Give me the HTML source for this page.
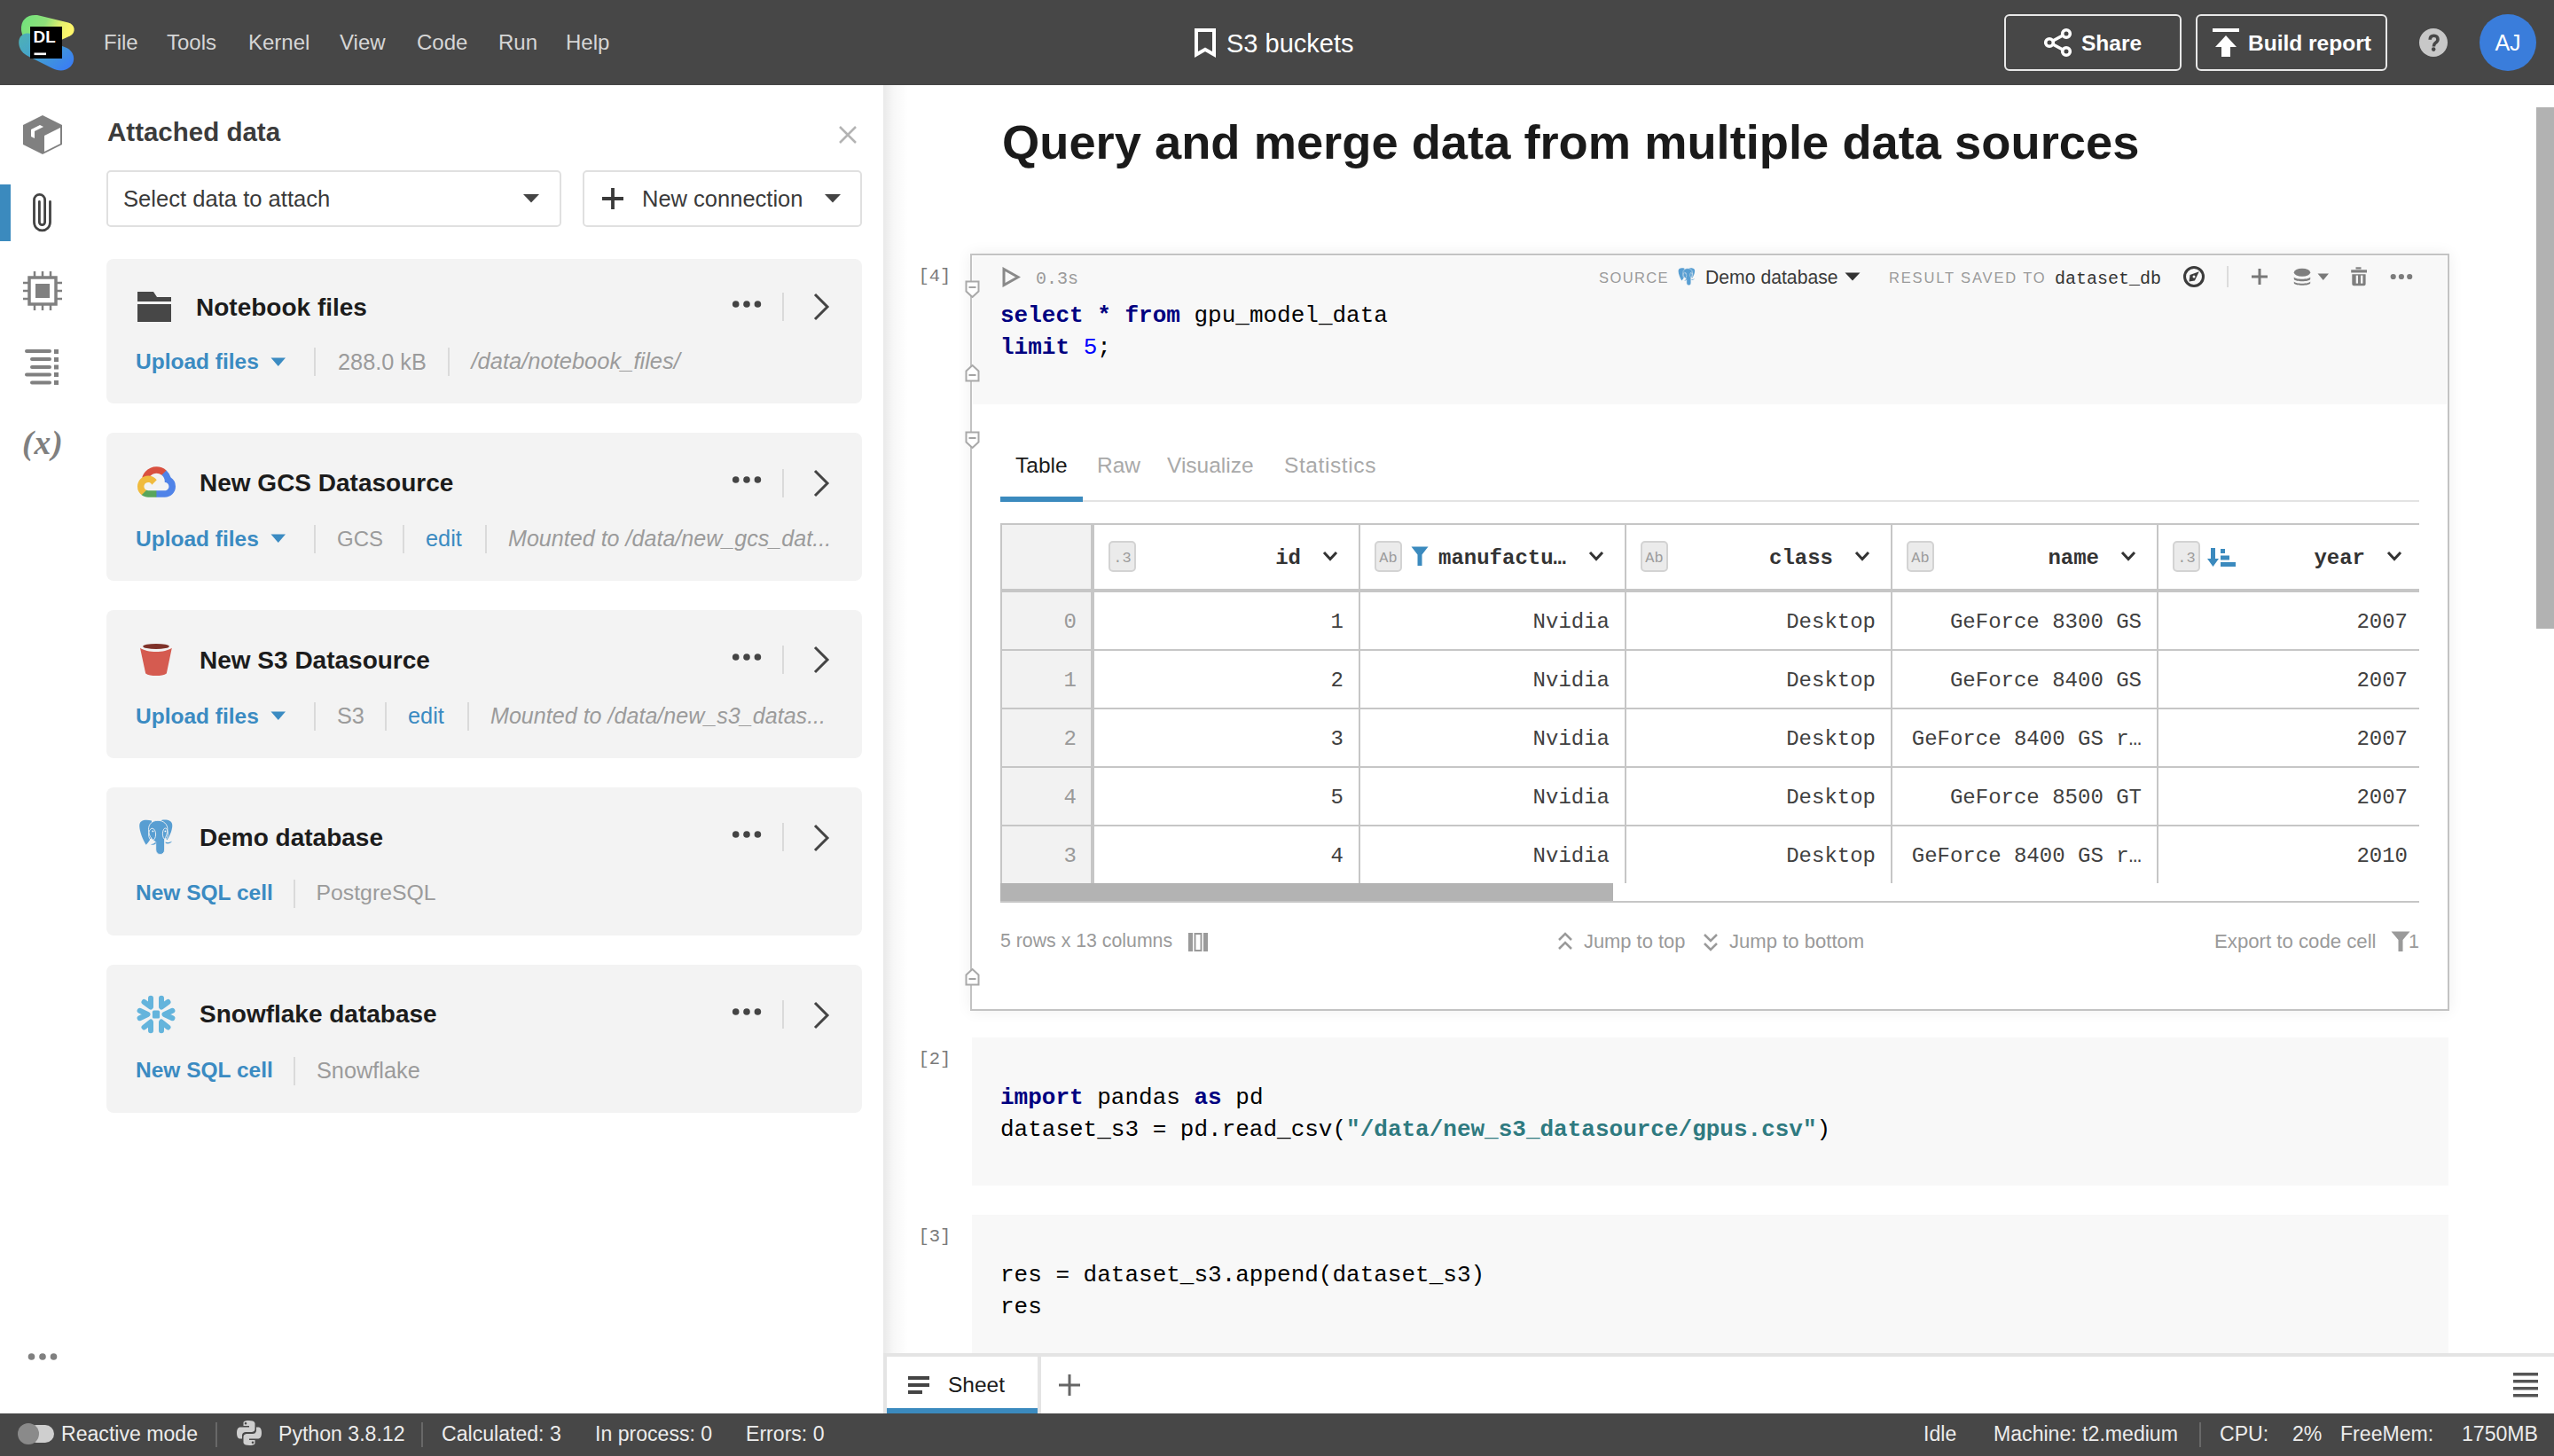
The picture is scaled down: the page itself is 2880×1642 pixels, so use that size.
<!DOCTYPE html><html><head><meta charset="utf-8"><style>
html,body{margin:0;padding:0;}
body{width:2880px;height:1642px;overflow:hidden;position:relative;background:#fff;font-family:"Liberation Sans",sans-serif;}
.t{position:absolute;white-space:pre;}
.r{position:absolute;}
</style></head><body>
<div class="r" style="left:0px;top:0px;width:2880px;height:96px;background:#474747;"></div>
<svg class="r" style="left:0px;top:0px;" width="100" height="96" viewBox="0 0 100 96">
<defs>
<linearGradient id="lg1" x1="0" y1="0" x2="1" y2="0.25"><stop offset="0" stop-color="#6ee27c"/><stop offset="0.5" stop-color="#8fe07a"/><stop offset="0.8" stop-color="#e6f06e"/><stop offset="1" stop-color="#fdf66b"/></linearGradient>
<linearGradient id="lg2" x1="0" y1="0" x2="1" y2="0.8"><stop offset="0" stop-color="#4fb2b4"/><stop offset="0.45" stop-color="#44a3cc"/><stop offset="1" stop-color="#3a7ef3"/></linearGradient>
</defs>
<path d="M24 34 C23 22 31 16 42 17 L77 25.5 C85 27.5 86 37 79 40.5 L68 45.5 L30 44 C26 42 24.5 38 24 34 Z" fill="url(#lg1)"/>
<path d="M21.5 51 C19.5 41 27 35 36 38.5 L74 53.5 C84 57.5 86 69 79 75.5 C73 81 65 80 59 77 L31 63 C25.5 60 22.5 56 21.5 51 Z" fill="url(#lg2)"/>
<rect x="34" y="30" width="36" height="36" fill="#000"/>
<text x="37.6" y="47.9" font-family="Liberation Sans" font-weight="700" font-size="18.8" fill="#fff">DL</text>
<rect x="38.5" y="59.5" width="13.5" height="2.6" fill="#fff"/>
</svg>
<div class="t" style="top:36.18px;font-size:24px;line-height:24px;color:#d6d6d6;font-weight:400;font-family:'Liberation Sans', sans-serif;font-style:normal;left:117px;">File</div>
<div class="t" style="top:36.18px;font-size:24px;line-height:24px;color:#d6d6d6;font-weight:400;font-family:'Liberation Sans', sans-serif;font-style:normal;left:188px;">Tools</div>
<div class="t" style="top:36.18px;font-size:24px;line-height:24px;color:#d6d6d6;font-weight:400;font-family:'Liberation Sans', sans-serif;font-style:normal;left:280px;">Kernel</div>
<div class="t" style="top:36.18px;font-size:24px;line-height:24px;color:#d6d6d6;font-weight:400;font-family:'Liberation Sans', sans-serif;font-style:normal;left:383px;">View</div>
<div class="t" style="top:36.18px;font-size:24px;line-height:24px;color:#d6d6d6;font-weight:400;font-family:'Liberation Sans', sans-serif;font-style:normal;left:470px;">Code</div>
<div class="t" style="top:36.18px;font-size:24px;line-height:24px;color:#d6d6d6;font-weight:400;font-family:'Liberation Sans', sans-serif;font-style:normal;left:562px;">Run</div>
<div class="t" style="top:36.18px;font-size:24px;line-height:24px;color:#d6d6d6;font-weight:400;font-family:'Liberation Sans', sans-serif;font-style:normal;left:638px;">Help</div>
<svg class="r" style="left:1344px;top:30px;" width="30" height="36" viewBox="0 0 30 36"><path d="M5 4 H25 V31.5 L15 25.8 L5 31.5 Z" fill="none" stroke="#fff" stroke-width="4" stroke-linejoin="miter"/></svg>
<div class="t" style="top:35.45px;font-size:29px;line-height:29px;color:#fff;font-weight:400;font-family:'Liberation Sans', sans-serif;font-style:normal;left:1383px;">S3 buckets</div>
<div class="r" style="left:2260px;top:16px;width:200px;height:64px;background:transparent;box-sizing:border-box;border:2px solid #e8e8e8;border-radius:6px;"></div>
<svg class="r" style="left:2304px;top:31px;" width="34" height="34" viewBox="0 0 34 34"><g fill="none" stroke="#fff" stroke-width="3.6">
<circle cx="26" cy="7" r="4.3"/><circle cx="7" cy="17" r="4.3"/><circle cx="26" cy="27" r="4.3"/>
<path d="M11 15 L22 9 M11 19 L22 25"/></g></svg>
<div class="t" style="top:36.76px;font-size:24.5px;line-height:24.5px;color:#fff;font-weight:700;font-family:'Liberation Sans', sans-serif;font-style:normal;left:2347px;">Share</div>
<div class="r" style="left:2476px;top:16px;width:216px;height:64px;background:transparent;box-sizing:border-box;border:2px solid #e8e8e8;border-radius:6px;"></div>
<svg class="r" style="left:2494px;top:31px;" width="32" height="34" viewBox="0 0 32 34"><rect x="1" y="1" width="30" height="4" fill="#fff"/><path d="M16 9 L4 22 H11 V33 H21 V22 H28 Z" fill="#fff"/></svg>
<div class="t" style="top:36.76px;font-size:24.5px;line-height:24.5px;color:#fff;font-weight:700;font-family:'Liberation Sans', sans-serif;font-style:normal;left:2535px;">Build report</div>
<svg class="r" style="left:2728px;top:32px;" width="32" height="32" viewBox="0 0 32 32"><circle cx="16" cy="16" r="16" fill="#c8c8c8"/><path d="M12.2 12.8 C12.2 9.8 14 8.2 16.6 8.2 C19.3 8.2 21 10 21 12.3 C21 14.6 19.6 15.6 18.2 16.5 C16.9 17.4 16.4 18.2 16.4 20.4" fill="none" stroke="#474747" stroke-width="3.6"/><circle cx="16.2" cy="23.6" r="2.3" fill="#474747"/></svg>
<svg class="r" style="left:2796px;top:16px;" width="64" height="64" viewBox="0 0 64 64"><circle cx="32" cy="32" r="32" fill="#3a7ddb"/></svg>
<div class="t" style="top:36.34px;font-size:25px;line-height:25px;color:#fff;font-weight:400;font-family:'Liberation Sans', sans-serif;font-style:normal;left:2128px;width:1400px;text-align:center;">AJ</div>
<svg class="r" style="left:24px;top:128px;" width="48" height="48" viewBox="0 0 48 48"><path d="M24 2 L46 13 V35 L24 46 L2 35 V13 Z" fill="#808080"/>
<path d="M26 25 L44 16 V34 L26 43 Z" fill="#fff"/>
<path d="M11 18 L21 13 L25 15 L15 20 V28 L11 26 Z" fill="#fff"/></svg>
<div class="r" style="left:0px;top:208px;width:12px;height:64px;background:#3b8abe;"></div>
<svg class="r" style="left:30px;top:210px;" width="36" height="56" viewBox="0 0 36 56"><path d="M14.4 17.5 V40.5 A3.1 3.1 0 0 0 20.6 40.5 V15.4 A6.05 6.05 0 0 0 8.5 15.4 V40.8 A9 9 0 0 0 26.5 40.8 V17.3" fill="none" stroke="#434343" stroke-width="2.8" stroke-linecap="round"/></svg>
<svg class="r" style="left:24px;top:304px;" width="48" height="48" viewBox="0 0 48 48"><rect x="9" y="9" width="30" height="30" fill="none" stroke="#808080" stroke-width="3.5"/>
<rect x="16" y="16" width="16" height="16" fill="#808080"/>
<g stroke="#808080" stroke-width="2.5">
<path d="M15 2 V8 M24 2 V8 M33 2 V8 M15 40 V46 M24 40 V46 M33 40 V46 M2 15 H8 M2 24 H8 M2 33 H8 M40 15 H46 M40 24 H46 M40 33 H46"/></g></svg>
<svg class="r" style="left:26px;top:392px;" width="44" height="44" viewBox="0 0 44 44"><g stroke="#808080" stroke-width="4" stroke-linecap="round">
<path d="M4 4 H30 M10 13 H30 M10 22 H30 M4 30.5 H30 M10 39.5 H30"/></g>
<g fill="#808080"><rect x="35" y="2" width="5" height="5"/><rect x="35" y="11" width="5" height="5"/><rect x="35" y="19.5" width="5" height="5"/><rect x="35" y="28" width="5" height="5"/><rect x="35" y="37" width="5" height="5"/></g></svg>
<div class="t" style="top:481.30px;font-size:37.5px;line-height:37.5px;color:#808080;font-weight:700;font-family:'Liberation Serif', serif;font-style:italic;letter-spacing:1px;left:25px;">(x)</div>
<svg class="r" style="left:28px;top:1522px;" width="40" height="16" viewBox="0 0 40 16"><g fill="#808080"><circle cx="7.5" cy="8" r="3.8"/><circle cx="20" cy="8" r="3.8"/><circle cx="32.5" cy="8" r="3.8"/></g></svg>
<div class="t" style="top:133.53px;font-size:29.5px;line-height:29.5px;color:#3c3c3c;font-weight:700;font-family:'Liberation Sans', sans-serif;font-style:normal;left:121px;">Attached data</div>
<svg class="r" style="left:944px;top:141px;" width="24" height="22" viewBox="0 0 24 22"><path d="M3 2 L21 20 M21 2 L3 20" stroke="#b3b3b3" stroke-width="2.5"/></svg>
<div class="r" style="left:120px;top:192px;width:513px;height:64px;background:#fff;box-sizing:border-box;border:2px solid #e0e0e0;border-radius:5px;"></div>
<div class="t" style="top:211.83px;font-size:25.6px;line-height:25.6px;color:#3a3a3a;font-weight:400;font-family:'Liberation Sans', sans-serif;font-style:normal;left:139px;">Select data to attach</div>
<svg class="r" style="left:589px;top:219px;" width="20" height="10" viewBox="0 0 20 10"><path d="M1 0 H19 L10 9.5 Z" fill="#444"/></svg>
<div class="r" style="left:657px;top:192px;width:315px;height:64px;background:#fff;box-sizing:border-box;border:2px solid #e0e0e0;border-radius:5px;"></div>
<svg class="r" style="left:676px;top:210px;" width="30" height="28" viewBox="0 0 30 28"><path d="M15 2 V26 M3 14 H27" stroke="#3a3a3a" stroke-width="3.8"/></svg>
<div class="t" style="top:211.91px;font-size:25.5px;line-height:25.5px;color:#3a3a3a;font-weight:400;font-family:'Liberation Sans', sans-serif;font-style:normal;left:724px;">New connection</div>
<svg class="r" style="left:929px;top:219px;" width="20" height="10" viewBox="0 0 20 10"><path d="M1 0 H19 L10 9.5 Z" fill="#444"/></svg>
<div class="r" style="left:120px;top:292px;width:852px;height:163px;background:#f3f3f3;border-radius:8px;"></div>
<svg class="r" style="left:154px;top:328px" width="40" height="36" viewBox="0 0 40 36"><path d="M1 1 H19 L23 7 H39 V12 H1 Z" fill="#474747"/><rect x="1" y="15" width="38" height="20" fill="#474747"/></svg>
<div class="t" style="top:332.60px;font-size:28px;line-height:28px;color:#1c1c1c;font-weight:700;font-family:'Liberation Sans', sans-serif;font-style:normal;left:221px;">Notebook files</div>
<svg class="r" style="left:822px;top:338px;" width="40" height="10" viewBox="0 0 40 10"><g fill="#444"><circle cx="7.7" cy="5" r="3.8"/><circle cx="20" cy="5" r="3.8"/><circle cx="32.4" cy="5" r="3.8"/></g></svg>
<div class="r" style="left:882px;top:330px;width:2px;height:32px;background:#dadada;"></div>
<svg class="r" style="left:914px;top:330px;" width="24" height="32" viewBox="0 0 24 32"><path d="M5 2 L19 16 L5 30" fill="none" stroke="#444" stroke-width="3"/></svg>
<div class="t" style="top:396.26px;font-size:24.5px;line-height:24.5px;color:#3b8bc2;font-weight:700;font-family:'Liberation Sans', sans-serif;font-style:normal;left:153px;">Upload files</div>
<svg class="r" style="left:305px;top:402.5px;" width="18" height="11" viewBox="0 0 18 11"><path d="M0.5 0.5 H17 L8.75 10 Z" fill="#3b8bc2"/></svg>
<div class="r" style="left:354px;top:392px;width:2px;height:32px;background:#dadada;"></div>
<div class="r" style="left:505px;top:392px;width:2px;height:32px;background:#dadada;"></div>
<div class="t" style="top:395.58px;font-size:25.3px;line-height:25.3px;color:#9b9b9b;font-weight:400;font-family:'Liberation Sans', sans-serif;font-style:normal;left:381px;">288.0 kB</div>
<div class="t" style="top:395.41px;font-size:25.5px;line-height:25.5px;color:#9b9b9b;font-weight:400;font-family:'Liberation Sans', sans-serif;font-style:italic;left:531.5px;">/data/notebook_files/</div>
<div class="r" style="left:120px;top:488px;width:852px;height:167px;background:#f3f3f3;border-radius:8px;"></div>
<svg class="r" style="left:154.5px;top:525.8px" width="43" height="35" viewBox="0 0 256 206"><path fill="#d9503f" d="M170.252 56.819l22.253-22.253 1.483-9.37C153.437-11.677 88.976-7.496 52.42 33.92 42.267 45.423 34.734 59.764 30.717 74.573l7.97-1.123 44.505-7.34 3.436-3.513c19.797-21.742 53.27-24.667 76.128-6.168l7.496.39z"/><path fill="#5083e8" d="M224.205 73.918a100.249 100.249 0 00-30.217-48.722l-31.232 31.232a55.515 55.515 0 0120.379 44.037v5.544c15.35 0 27.797 12.445 27.797 27.796 0 15.352-12.446 27.485-27.797 27.485h-55.671l-5.466 5.934v33.34l5.466 5.231h55.67c39.93.311 72.553-31.494 72.864-71.424a72.303 72.303 0 00-31.793-60.453"/><path fill="#58a55c" d="M71.87 205.796h55.593V161.29H71.87a27.275 27.275 0 01-11.399-2.498l-7.887 2.42-22.409 22.253-1.952 7.574c12.567 9.489 27.9 14.825 43.647 14.757"/><path fill="#f0bb3e" d="M71.87 61.425C31.94 61.664-.237 94.228.001 134.159a72.301 72.301 0 0028.222 56.88l32.248-32.246c-13.99-6.322-20.208-22.786-13.887-36.776 6.32-13.99 22.786-20.208 36.775-13.888a27.796 27.796 0 0113.887 13.888l32.248-32.248A72.224 72.224 0 0071.87 61.425"/></svg>
<div class="t" style="top:531.00px;font-size:28px;line-height:28px;color:#1c1c1c;font-weight:700;font-family:'Liberation Sans', sans-serif;font-style:normal;left:225px;">New GCS Datasource</div>
<svg class="r" style="left:822px;top:536px;" width="40" height="10" viewBox="0 0 40 10"><g fill="#444"><circle cx="7.7" cy="5" r="3.8"/><circle cx="20" cy="5" r="3.8"/><circle cx="32.4" cy="5" r="3.8"/></g></svg>
<div class="r" style="left:882px;top:528.5px;width:2px;height:32px;background:#dadada;"></div>
<svg class="r" style="left:914px;top:528.5px;" width="24" height="32" viewBox="0 0 24 32"><path d="M5 2 L19 16 L5 30" fill="none" stroke="#444" stroke-width="3"/></svg>
<div class="t" style="top:595.96px;font-size:24.5px;line-height:24.5px;color:#3b8bc2;font-weight:700;font-family:'Liberation Sans', sans-serif;font-style:normal;left:153px;">Upload files</div>
<svg class="r" style="left:305px;top:602.2px;" width="18" height="11" viewBox="0 0 18 11"><path d="M0.5 0.5 H17 L8.75 10 Z" fill="#3b8bc2"/></svg>
<div class="r" style="left:354px;top:592px;width:2px;height:32px;background:#dadada;"></div>
<div class="r" style="left:454px;top:592px;width:2px;height:32px;background:#dadada;"></div>
<div class="r" style="left:547px;top:592px;width:2px;height:32px;background:#dadada;"></div>
<div class="t" style="top:596.38px;font-size:24px;line-height:24px;color:#9b9b9b;font-weight:400;font-family:'Liberation Sans', sans-serif;font-style:normal;left:380px;">GCS</div>
<div class="t" style="top:595.28px;font-size:25.3px;line-height:25.3px;color:#3b8bc2;font-weight:400;font-family:'Liberation Sans', sans-serif;font-style:normal;left:480px;">edit</div>
<div class="t" style="top:595.45px;font-size:25.1px;line-height:25.1px;color:#9b9b9b;font-weight:400;font-family:'Liberation Sans', sans-serif;font-style:italic;left:573px;">Mounted to /data/new_gcs_dat...</div>
<div class="r" style="left:120px;top:688px;width:852px;height:167px;background:#f3f3f3;border-radius:8px;"></div>
<svg class="r" style="left:156px;top:725px" width="40" height="40" viewBox="0 0 40 40"><path d="M2 5.8 L8.2 34.4 C13 38 27 38 31.8 34.4 L37.8 5.8 C30 11.5 10 11.5 2 5.8 Z" fill="#d55b50"/><ellipse cx="20" cy="3.9" rx="14.8" ry="3" fill="#7e3128"/></svg>
<div class="t" style="top:731.10px;font-size:28px;line-height:28px;color:#1c1c1c;font-weight:700;font-family:'Liberation Sans', sans-serif;font-style:normal;left:225px;">New S3 Datasource</div>
<svg class="r" style="left:822px;top:735.7px;" width="40" height="10" viewBox="0 0 40 10"><g fill="#444"><circle cx="7.7" cy="5" r="3.8"/><circle cx="20" cy="5" r="3.8"/><circle cx="32.4" cy="5" r="3.8"/></g></svg>
<div class="r" style="left:882px;top:728px;width:2px;height:32px;background:#dadada;"></div>
<svg class="r" style="left:914px;top:728px;" width="24" height="32" viewBox="0 0 24 32"><path d="M5 2 L19 16 L5 30" fill="none" stroke="#444" stroke-width="3"/></svg>
<div class="t" style="top:795.76px;font-size:24.5px;line-height:24.5px;color:#3b8bc2;font-weight:700;font-family:'Liberation Sans', sans-serif;font-style:normal;left:153px;">Upload files</div>
<svg class="r" style="left:305px;top:802.0px;" width="18" height="11" viewBox="0 0 18 11"><path d="M0.5 0.5 H17 L8.75 10 Z" fill="#3b8bc2"/></svg>
<div class="r" style="left:354px;top:792px;width:2px;height:32px;background:#dadada;"></div>
<div class="r" style="left:434px;top:792px;width:2px;height:32px;background:#dadada;"></div>
<div class="r" style="left:527px;top:792px;width:2px;height:32px;background:#dadada;"></div>
<div class="t" style="top:795.08px;font-size:25.3px;line-height:25.3px;color:#9b9b9b;font-weight:400;font-family:'Liberation Sans', sans-serif;font-style:normal;left:380px;">S3</div>
<div class="t" style="top:795.08px;font-size:25.3px;line-height:25.3px;color:#3b8bc2;font-weight:400;font-family:'Liberation Sans', sans-serif;font-style:normal;left:460px;">edit</div>
<div class="t" style="top:795.25px;font-size:25.1px;line-height:25.1px;color:#9b9b9b;font-weight:400;font-family:'Liberation Sans', sans-serif;font-style:italic;left:553px;">Mounted to /data/new_s3_datas...</div>
<div class="r" style="left:120px;top:888px;width:852px;height:167px;background:#f3f3f3;border-radius:8px;"></div>
<svg class="r" style="left:140px;top:900px" width="80" height="80" viewBox="0 0 80 80"><g fill="#589ed2"><path d="M31 25.5 C25 24 17 24 17.2 31.5 C17.5 38 21 47 24.7 52.8 C27.5 50 30 46 31 43 Z"/><path d="M42 25 C47 24 54.5 24.5 54.3 31.5 C54 37 51 43.5 48.4 47.3 C46 45 44 42 43 40 Z"/><path d="M38 25.3 C44.5 25.3 48.9 29.5 48.9 35 C48.9 40 47 43.5 45.6 47 L45.6 58 C45.6 61.5 43.5 63.5 40.7 63.5 C38 63.5 35.7 61.5 35.7 58 L35.7 49.5 C33 48 27.5 44 27.5 35.5 C27.5 29.5 31.5 25.3 38 25.3 Z" stroke="#f3f3f3" stroke-width="0.9"/><path d="M29.7 52 C32 52.5 34.5 51 35.7 49 L35.7 51.5 C34 53 31.5 53.2 29.7 52 Z"/><path d="M46.7 49.5 C49 50.5 52 50 54 48.5 C53 51 49.5 52 46.7 51 Z"/><ellipse cx="31.6" cy="41" rx="4" ry="6.8" fill="none" stroke="#f3f3f3" stroke-width="0.9"/><ellipse cx="46.4" cy="40.3" rx="3" ry="6.3" fill="none" stroke="#f3f3f3" stroke-width="0.9"/><circle cx="32.4" cy="37.4" r="0.9" fill="#fff"/><circle cx="46.4" cy="37.4" r="0.9" fill="#fff"/></g></svg>
<div class="t" style="top:930.90px;font-size:28px;line-height:28px;color:#1c1c1c;font-weight:700;font-family:'Liberation Sans', sans-serif;font-style:normal;left:225px;">Demo database</div>
<svg class="r" style="left:822px;top:935.8px;" width="40" height="10" viewBox="0 0 40 10"><g fill="#444"><circle cx="7.7" cy="5" r="3.8"/><circle cx="20" cy="5" r="3.8"/><circle cx="32.4" cy="5" r="3.8"/></g></svg>
<div class="r" style="left:882px;top:928px;width:2px;height:32px;background:#dadada;"></div>
<svg class="r" style="left:914px;top:928.6px;" width="24" height="32" viewBox="0 0 24 32"><path d="M5 2 L19 16 L5 30" fill="none" stroke="#444" stroke-width="3"/></svg>
<div class="t" style="top:995.46px;font-size:24.5px;line-height:24.5px;color:#3b8bc2;font-weight:700;font-family:'Liberation Sans', sans-serif;font-style:normal;left:153px;">New SQL cell</div>
<div class="r" style="left:331px;top:992px;width:2px;height:32px;background:#dadada;"></div>
<div class="t" style="top:995.21px;font-size:24.8px;line-height:24.8px;color:#9b9b9b;font-weight:400;font-family:'Liberation Sans', sans-serif;font-style:normal;left:356.5px;">PostgreSQL</div>
<div class="r" style="left:120px;top:1088px;width:852px;height:167px;background:#f3f3f3;border-radius:8px;"></div>
<svg class="r" style="left:140px;top:1100px" width="80" height="80" viewBox="0 0 80 80"><g fill="none" stroke="#64b4dc" stroke-width="6" stroke-linecap="round" stroke-linejoin="round"><path d="M22.5 30 L30 35.5 V25.8"/><path d="M49.5 30 L42 35.5 V25.8"/><path d="M17.6 39.8 L26.5 44 L17.6 48.2"/><path d="M54.4 39.8 L45.5 44 L54.4 48.2"/><path d="M22.5 58.5 L30 52.5 V62.3"/><path d="M49.5 58.5 L42 52.5 V62.3"/></g><rect x="31.9" y="39.6" width="8.2" height="9" rx="1.6" fill="#64b4dc"/></svg>
<div class="t" style="top:1129.90px;font-size:28px;line-height:28px;color:#1c1c1c;font-weight:700;font-family:'Liberation Sans', sans-serif;font-style:normal;left:225px;">Snowflake database</div>
<svg class="r" style="left:822px;top:1136px;" width="40" height="10" viewBox="0 0 40 10"><g fill="#444"><circle cx="7.7" cy="5" r="3.8"/><circle cx="20" cy="5" r="3.8"/><circle cx="32.4" cy="5" r="3.8"/></g></svg>
<div class="r" style="left:882px;top:1128px;width:2px;height:32px;background:#dadada;"></div>
<svg class="r" style="left:914px;top:1128.7px;" width="24" height="32" viewBox="0 0 24 32"><path d="M5 2 L19 16 L5 30" fill="none" stroke="#444" stroke-width="3"/></svg>
<div class="t" style="top:1195.26px;font-size:24.5px;line-height:24.5px;color:#3b8bc2;font-weight:700;font-family:'Liberation Sans', sans-serif;font-style:normal;left:153px;">New SQL cell</div>
<div class="r" style="left:331px;top:1192px;width:2px;height:32px;background:#dadada;"></div>
<div class="t" style="top:1194.58px;font-size:25.3px;line-height:25.3px;color:#9b9b9b;font-weight:400;font-family:'Liberation Sans', sans-serif;font-style:normal;left:357px;">Snowflake</div>
<div class="r" style="left:996px;top:96px;width:28px;height:1430px;background:linear-gradient(to right, rgba(0,0,0,0.085), rgba(0,0,0,0.03) 40%, rgba(0,0,0,0));"></div>
<div class="r" style="left:2860px;top:121px;width:20px;height:588px;background:#b2b2b2;"></div>
<div class="t" style="top:134.04px;font-size:54.3px;line-height:54.3px;color:#1a1a1a;font-weight:700;font-family:'Liberation Sans', sans-serif;font-style:normal;left:1130px;">Query and merge data from multiple data sources</div>
<div class="r" style="left:1094px;top:286px;width:1668px;height:854px;background:#fff;box-sizing:border-box;border:2px solid #c3c3c3;box-shadow:0 0 16px rgba(0,0,0,0.07);"></div>
<div class="r" style="left:1097px;top:289px;width:1662px;height:167px;background:#f8f8f8;"></div>
<div class="t" style="top:302.29px;font-size:20.5px;line-height:20.5px;color:#7a7a7a;font-weight:400;font-family:'Liberation Mono', monospace;font-style:normal;left:1035.5px;">[4]</div>
<svg class="r" style="left:1087.5px;top:315.5px;" width="17" height="20" viewBox="0 0 17 20"><path d="M1.5 1.5 H15.5 V12.5 L8.5 19 L1.5 12.5 Z" fill="#fff" stroke="#a9a9a9" stroke-width="2"/><path d="M4.5 8 H12.5" stroke="#a3a3a3" stroke-width="2"/></svg>
<svg class="r" style="left:1087.5px;top:410.5px;" width="17" height="20" viewBox="0 0 17 20"><path d="M1.5 18.5 H15.5 V7.5 L8.5 1 L1.5 7.5 Z" fill="#fff" stroke="#a9a9a9" stroke-width="2"/><path d="M4.5 12 H12.5" stroke="#a3a3a3" stroke-width="2"/></svg>
<svg class="r" style="left:1087.5px;top:486px;" width="17" height="20" viewBox="0 0 17 20"><path d="M1.5 1.5 H15.5 V12.5 L8.5 19 L1.5 12.5 Z" fill="#fff" stroke="#a9a9a9" stroke-width="2"/><path d="M4.5 8 H12.5" stroke="#a3a3a3" stroke-width="2"/></svg>
<svg class="r" style="left:1087.5px;top:1092px;" width="17" height="20" viewBox="0 0 17 20"><path d="M1.5 18.5 H15.5 V7.5 L8.5 1 L1.5 7.5 Z" fill="#fff" stroke="#a9a9a9" stroke-width="2"/><path d="M4.5 12 H12.5" stroke="#a3a3a3" stroke-width="2"/></svg>
<svg class="r" style="left:1129px;top:301px;" width="22" height="23" viewBox="0 0 22 23"><path d="M3 2.5 L19 11.5 L3 20.5 Z" fill="none" stroke="#8a8a8a" stroke-width="3" stroke-linejoin="miter"/></svg>
<div class="t" style="top:304.68px;font-size:20px;line-height:20px;color:#9a9a9a;font-weight:400;font-family:'Liberation Mono', monospace;font-style:normal;left:1168px;">0.3s</div>
<div class="t" style="top:343.08px;font-size:26px;line-height:26px;color:#000;font-weight:400;font-family:'Liberation Mono', monospace;font-style:normal;left:1128px;"><b style="color:#000080">select</b> <b style="color:#000080">*</b> <b style="color:#000080">from</b> gpu_model_data</div>
<div class="t" style="top:379.08px;font-size:26px;line-height:26px;color:#000;font-weight:400;font-family:'Liberation Mono', monospace;font-style:normal;left:1128px;"><b style="color:#000080">limit</b> <span style="color:#0000ff">5</span>;</div>
<div class="t" style="top:305.03px;font-size:16.5px;line-height:16.5px;color:#9a9a9a;font-weight:400;font-family:'Liberation Sans', sans-serif;font-style:normal;letter-spacing:1.4px;left:1803px;">SOURCE</div>
<svg class="r" style="left:1884px;top:289.5px" width="40" height="40" viewBox="0 0 80 80"><g fill="#589ed2"><path d="M31 25.5 C25 24 17 24 17.2 31.5 C17.5 38 21 47 24.7 52.8 C27.5 50 30 46 31 43 Z"/><path d="M42 25 C47 24 54.5 24.5 54.3 31.5 C54 37 51 43.5 48.4 47.3 C46 45 44 42 43 40 Z"/><path d="M38 25.3 C44.5 25.3 48.9 29.5 48.9 35 C48.9 40 47 43.5 45.6 47 L45.6 58 C45.6 61.5 43.5 63.5 40.7 63.5 C38 63.5 35.7 61.5 35.7 58 L35.7 49.5 C33 48 27.5 44 27.5 35.5 C27.5 29.5 31.5 25.3 38 25.3 Z" stroke="#f3f3f3" stroke-width="0.9"/><path d="M29.7 52 C32 52.5 34.5 51 35.7 49 L35.7 51.5 C34 53 31.5 53.2 29.7 52 Z"/><path d="M46.7 49.5 C49 50.5 52 50 54 48.5 C53 51 49.5 52 46.7 51 Z"/><ellipse cx="31.6" cy="41" rx="4" ry="6.8" fill="none" stroke="#f3f3f3" stroke-width="0.9"/><ellipse cx="46.4" cy="40.3" rx="3" ry="6.3" fill="none" stroke="#f3f3f3" stroke-width="0.9"/><circle cx="32.4" cy="37.4" r="0.9" fill="#fff"/><circle cx="46.4" cy="37.4" r="0.9" fill="#fff"/></g></svg>
<div class="t" style="top:301.75px;font-size:21.2px;line-height:21.2px;color:#3a3a3a;font-weight:400;font-family:'Liberation Sans', sans-serif;font-style:normal;left:1923px;">Demo database</div>
<svg class="r" style="left:2080px;top:307px;" width="18" height="10" viewBox="0 0 18 10"><path d="M0.5 0.5 H17.5 L9 9.5 Z" fill="#333"/></svg>
<div class="t" style="top:305.03px;font-size:16.5px;line-height:16.5px;color:#9a9a9a;font-weight:400;font-family:'Liberation Sans', sans-serif;font-style:normal;letter-spacing:1.85px;left:2130px;">RESULT SAVED TO</div>
<div class="t" style="top:304.68px;font-size:20px;line-height:20px;color:#333;font-weight:400;font-family:'Liberation Mono', monospace;font-style:normal;left:2317px;">dataset_db</div>
<svg class="r" style="left:2461px;top:299px;" width="26" height="26" viewBox="0 0 26 26"><circle cx="13" cy="13" r="10.5" fill="none" stroke="#3c3c3c" stroke-width="3"/><path d="M18.8 7.2 L13.9 17.6 L7.5 18.6 L8.5 11 Z" fill="#3c3c3c"/><circle cx="13" cy="13" r="1.5" fill="#f8f8f8"/></svg>
<div class="r" style="left:2511px;top:300px;width:2px;height:24px;background:#dcdcdc;"></div>
<svg class="r" style="left:2538px;top:302px;" width="20" height="20" viewBox="0 0 20 20"><path d="M10 1 V19 M1 10 H19" stroke="#787878" stroke-width="3"/></svg>
<svg class="r" style="left:2586px;top:302px;" width="20" height="21" viewBox="0 0 20 21"><g fill="#7f7f7f"><ellipse cx="10" cy="5.3" rx="9.2" ry="4.5"/><path d="M0.8 10.5 C2.5 13.5 17.5 13.5 19.2 10.5 V13 C17.5 16 2.5 16 0.8 13 Z"/><path d="M0.8 15.5 C2.5 18.5 17.5 18.5 19.2 15.5 V17.5 C17.5 20.5 2.5 20.5 0.8 17.5 Z"/></g></svg>
<svg class="r" style="left:2613px;top:308px;" width="14" height="9" viewBox="0 0 14 9"><path d="M0.5 0.5 H13 L6.75 8 Z" fill="#7a7a7a"/></svg>
<svg class="r" style="left:2650px;top:300px;" width="20" height="24" viewBox="0 0 20 24"><g fill="#7f7f7f"><rect x="6.5" y="1.3" width="6" height="2.2"/><rect x="1.2" y="4.3" width="17.8" height="3.2"/><path d="M2.3 9.2 H17.6 V20.3 C17.6 21.5 16.8 22.3 15.6 22.3 H4.3 C3.1 22.3 2.3 21.5 2.3 20.3 Z"/></g><g fill="#f8f8f8"><rect x="6.7" y="10.6" width="2.3" height="9"/><rect x="12" y="10.6" width="2.4" height="9"/></g></svg>
<svg class="r" style="left:2694px;top:307px;" width="28" height="10" viewBox="0 0 28 10"><g fill="#7c7c7c"><circle cx="4.7" cy="5" r="3.1"/><circle cx="13.9" cy="5" r="3.1"/><circle cx="23.2" cy="5" r="3.1"/></g></svg>
<div class="t" style="top:512.66px;font-size:24.5px;line-height:24.5px;color:#1a1a1a;font-weight:400;font-family:'Liberation Sans', sans-serif;font-style:normal;left:1145px;">Table</div>
<div class="t" style="top:512.66px;font-size:24.5px;line-height:24.5px;color:#a9a9a9;font-weight:400;font-family:'Liberation Sans', sans-serif;font-style:normal;left:1237px;">Raw</div>
<div class="t" style="top:512.66px;font-size:24.5px;line-height:24.5px;color:#a9a9a9;font-weight:400;font-family:'Liberation Sans', sans-serif;font-style:normal;left:1316px;">Visualize</div>
<div class="t" style="top:512.66px;font-size:24.5px;line-height:24.5px;color:#a9a9a9;font-weight:400;font-family:'Liberation Sans', sans-serif;font-style:normal;letter-spacing:0.6px;left:1448px;">Statistics</div>
<div class="r" style="left:1128px;top:564px;width:1600px;height:2px;background:#e3e3e3;"></div>
<div class="r" style="left:1128px;top:560px;width:93px;height:6px;background:#3b8abe;"></div>
<div class="r" style="left:1128px;top:590px;width:102px;height:406px;background:#f2f2f2;"></div>
<div class="r" style="left:1128px;top:590px;width:1600px;height:2px;background:#c6c6c6;"></div>
<div class="r" style="left:1128px;top:590px;width:2px;height:428px;background:#c6c6c6;"></div>
<div class="r" style="left:1128px;top:664px;width:1600px;height:4px;background:#c6c6c6;"></div>
<div class="r" style="left:1128px;top:732px;width:1600px;height:2px;background:#c6c6c6;"></div>
<div class="r" style="left:1128px;top:798px;width:1600px;height:2px;background:#c6c6c6;"></div>
<div class="r" style="left:1128px;top:864px;width:1600px;height:2px;background:#c6c6c6;"></div>
<div class="r" style="left:1128px;top:930px;width:1600px;height:2px;background:#c6c6c6;"></div>
<div class="r" style="left:1230px;top:590px;width:4px;height:406px;background:#c6c6c6;"></div>
<div class="r" style="left:1532px;top:590px;width:2px;height:406px;background:#c6c6c6;"></div>
<div class="r" style="left:1832px;top:590px;width:2px;height:406px;background:#c6c6c6;"></div>
<div class="r" style="left:2132px;top:590px;width:2px;height:406px;background:#c6c6c6;"></div>
<div class="r" style="left:2432px;top:590px;width:2px;height:406px;background:#c6c6c6;"></div>
<div class="r" style="left:1128px;top:996px;width:1600px;height:22px;background:#fff;box-sizing:border-box;border-bottom:2px solid #c6c6c6;"></div>
<div class="r" style="left:1128px;top:996px;width:691px;height:20px;background:#b3b3b3;"></div>
<div class="r" style="left:1250px;top:610px;width:31px;height:35px;background:#ebebeb;box-sizing:border-box;border:2px solid #d3d3d3;border-radius:5px;"></div>
<div class="t" style="top:620.97px;font-size:17px;line-height:17px;color:#9d9d9d;font-weight:400;font-family:'Liberation Mono', monospace;font-style:normal;left:565.5px;width:1400px;text-align:center;">.3</div>
<div class="t" style="top:617.61px;font-size:24px;line-height:24px;color:#333;font-weight:700;font-family:'Liberation Mono', monospace;font-style:normal;left:67px;width:1400px;text-align:right;">id</div>
<svg class="r" style="left:1491px;top:621px;" width="18" height="13" viewBox="0 0 18 13"><path d="M2 2 L9 9.5 L16 2" fill="none" stroke="#333" stroke-width="3"/></svg>
<div class="r" style="left:1550px;top:610px;width:31px;height:35px;background:#ebebeb;box-sizing:border-box;border:2px solid #d3d3d3;border-radius:5px;"></div>
<div class="t" style="top:620.97px;font-size:17px;line-height:17px;color:#9d9d9d;font-weight:400;font-family:'Liberation Mono', monospace;font-style:normal;left:865.5px;width:1400px;text-align:center;">Ab</div>
<div class="t" style="top:617.61px;font-size:24px;line-height:24px;color:#333;font-weight:700;font-family:'Liberation Mono', monospace;font-style:normal;left:1622px;">manufactu…</div>
<svg class="r" style="left:1791px;top:621px;" width="18" height="13" viewBox="0 0 18 13"><path d="M2 2 L9 9.5 L16 2" fill="none" stroke="#333" stroke-width="3"/></svg>
<div class="r" style="left:1850px;top:610px;width:31px;height:35px;background:#ebebeb;box-sizing:border-box;border:2px solid #d3d3d3;border-radius:5px;"></div>
<div class="t" style="top:620.97px;font-size:17px;line-height:17px;color:#9d9d9d;font-weight:400;font-family:'Liberation Mono', monospace;font-style:normal;left:1165.5px;width:1400px;text-align:center;">Ab</div>
<div class="t" style="top:617.61px;font-size:24px;line-height:24px;color:#333;font-weight:700;font-family:'Liberation Mono', monospace;font-style:normal;left:667px;width:1400px;text-align:right;">class</div>
<svg class="r" style="left:2091px;top:621px;" width="18" height="13" viewBox="0 0 18 13"><path d="M2 2 L9 9.5 L16 2" fill="none" stroke="#333" stroke-width="3"/></svg>
<div class="r" style="left:2150px;top:610px;width:31px;height:35px;background:#ebebeb;box-sizing:border-box;border:2px solid #d3d3d3;border-radius:5px;"></div>
<div class="t" style="top:620.97px;font-size:17px;line-height:17px;color:#9d9d9d;font-weight:400;font-family:'Liberation Mono', monospace;font-style:normal;left:1465.5px;width:1400px;text-align:center;">Ab</div>
<div class="t" style="top:617.61px;font-size:24px;line-height:24px;color:#333;font-weight:700;font-family:'Liberation Mono', monospace;font-style:normal;left:967px;width:1400px;text-align:right;">name</div>
<svg class="r" style="left:2391px;top:621px;" width="18" height="13" viewBox="0 0 18 13"><path d="M2 2 L9 9.5 L16 2" fill="none" stroke="#333" stroke-width="3"/></svg>
<div class="r" style="left:2450px;top:610px;width:31px;height:35px;background:#ebebeb;box-sizing:border-box;border:2px solid #d3d3d3;border-radius:5px;"></div>
<div class="t" style="top:620.97px;font-size:17px;line-height:17px;color:#9d9d9d;font-weight:400;font-family:'Liberation Mono', monospace;font-style:normal;left:1765.5px;width:1400px;text-align:center;">.3</div>
<div class="t" style="top:617.61px;font-size:24px;line-height:24px;color:#333;font-weight:700;font-family:'Liberation Mono', monospace;font-style:normal;left:1267px;width:1400px;text-align:right;">year</div>
<svg class="r" style="left:2691px;top:621px;" width="18" height="13" viewBox="0 0 18 13"><path d="M2 2 L9 9.5 L16 2" fill="none" stroke="#333" stroke-width="3"/></svg>
<svg class="r" style="left:1591px;top:616px;" width="20" height="23" viewBox="0 0 20 23"><path d="M0.5 0.5 H19.5 L12.5 9.5 V22 H7.5 V9.5 Z" fill="#3b8abe"/></svg>
<svg class="r" style="left:2488px;top:617px;" width="34" height="24" viewBox="0 0 34 24"><path d="M5 1 H10 V13 H14 L7.5 22 L1 13 H5 Z" fill="#3b8abe"/><g fill="#3b8abe"><rect x="16" y="2" width="5" height="5"/><rect x="16" y="9.5" width="10" height="5"/><rect x="16" y="17" width="17" height="5"/></g></svg>
<div class="t" style="top:690.21px;font-size:24px;line-height:24px;color:#9a9a9a;font-weight:400;font-family:'Liberation Mono', monospace;font-style:normal;left:-186px;width:1400px;text-align:right;">0</div>
<div class="t" style="top:690.21px;font-size:24px;line-height:24px;color:#404040;font-weight:400;font-family:'Liberation Mono', monospace;font-style:normal;left:115px;width:1400px;text-align:right;">1</div>
<div class="t" style="top:690.21px;font-size:24px;line-height:24px;color:#404040;font-weight:400;font-family:'Liberation Mono', monospace;font-style:normal;left:415px;width:1400px;text-align:right;">Nvidia</div>
<div class="t" style="top:690.21px;font-size:24px;line-height:24px;color:#404040;font-weight:400;font-family:'Liberation Mono', monospace;font-style:normal;left:715px;width:1400px;text-align:right;">Desktop</div>
<div class="t" style="top:690.21px;font-size:24px;line-height:24px;color:#404040;font-weight:400;font-family:'Liberation Mono', monospace;font-style:normal;left:1015px;width:1400px;text-align:right;">GeForce 8300 GS</div>
<div class="t" style="top:690.21px;font-size:24px;line-height:24px;color:#404040;font-weight:400;font-family:'Liberation Mono', monospace;font-style:normal;left:1315px;width:1400px;text-align:right;">2007</div>
<div class="t" style="top:756.21px;font-size:24px;line-height:24px;color:#9a9a9a;font-weight:400;font-family:'Liberation Mono', monospace;font-style:normal;left:-186px;width:1400px;text-align:right;">1</div>
<div class="t" style="top:756.21px;font-size:24px;line-height:24px;color:#404040;font-weight:400;font-family:'Liberation Mono', monospace;font-style:normal;left:115px;width:1400px;text-align:right;">2</div>
<div class="t" style="top:756.21px;font-size:24px;line-height:24px;color:#404040;font-weight:400;font-family:'Liberation Mono', monospace;font-style:normal;left:415px;width:1400px;text-align:right;">Nvidia</div>
<div class="t" style="top:756.21px;font-size:24px;line-height:24px;color:#404040;font-weight:400;font-family:'Liberation Mono', monospace;font-style:normal;left:715px;width:1400px;text-align:right;">Desktop</div>
<div class="t" style="top:756.21px;font-size:24px;line-height:24px;color:#404040;font-weight:400;font-family:'Liberation Mono', monospace;font-style:normal;left:1015px;width:1400px;text-align:right;">GeForce 8400 GS</div>
<div class="t" style="top:756.21px;font-size:24px;line-height:24px;color:#404040;font-weight:400;font-family:'Liberation Mono', monospace;font-style:normal;left:1315px;width:1400px;text-align:right;">2007</div>
<div class="t" style="top:822.21px;font-size:24px;line-height:24px;color:#9a9a9a;font-weight:400;font-family:'Liberation Mono', monospace;font-style:normal;left:-186px;width:1400px;text-align:right;">2</div>
<div class="t" style="top:822.21px;font-size:24px;line-height:24px;color:#404040;font-weight:400;font-family:'Liberation Mono', monospace;font-style:normal;left:115px;width:1400px;text-align:right;">3</div>
<div class="t" style="top:822.21px;font-size:24px;line-height:24px;color:#404040;font-weight:400;font-family:'Liberation Mono', monospace;font-style:normal;left:415px;width:1400px;text-align:right;">Nvidia</div>
<div class="t" style="top:822.21px;font-size:24px;line-height:24px;color:#404040;font-weight:400;font-family:'Liberation Mono', monospace;font-style:normal;left:715px;width:1400px;text-align:right;">Desktop</div>
<div class="t" style="top:822.21px;font-size:24px;line-height:24px;color:#404040;font-weight:400;font-family:'Liberation Mono', monospace;font-style:normal;left:1015px;width:1400px;text-align:right;">GeForce 8400 GS r…</div>
<div class="t" style="top:822.21px;font-size:24px;line-height:24px;color:#404040;font-weight:400;font-family:'Liberation Mono', monospace;font-style:normal;left:1315px;width:1400px;text-align:right;">2007</div>
<div class="t" style="top:888.21px;font-size:24px;line-height:24px;color:#9a9a9a;font-weight:400;font-family:'Liberation Mono', monospace;font-style:normal;left:-186px;width:1400px;text-align:right;">4</div>
<div class="t" style="top:888.21px;font-size:24px;line-height:24px;color:#404040;font-weight:400;font-family:'Liberation Mono', monospace;font-style:normal;left:115px;width:1400px;text-align:right;">5</div>
<div class="t" style="top:888.21px;font-size:24px;line-height:24px;color:#404040;font-weight:400;font-family:'Liberation Mono', monospace;font-style:normal;left:415px;width:1400px;text-align:right;">Nvidia</div>
<div class="t" style="top:888.21px;font-size:24px;line-height:24px;color:#404040;font-weight:400;font-family:'Liberation Mono', monospace;font-style:normal;left:715px;width:1400px;text-align:right;">Desktop</div>
<div class="t" style="top:888.21px;font-size:24px;line-height:24px;color:#404040;font-weight:400;font-family:'Liberation Mono', monospace;font-style:normal;left:1015px;width:1400px;text-align:right;">GeForce 8500 GT</div>
<div class="t" style="top:888.21px;font-size:24px;line-height:24px;color:#404040;font-weight:400;font-family:'Liberation Mono', monospace;font-style:normal;left:1315px;width:1400px;text-align:right;">2007</div>
<div class="t" style="top:954.21px;font-size:24px;line-height:24px;color:#9a9a9a;font-weight:400;font-family:'Liberation Mono', monospace;font-style:normal;left:-186px;width:1400px;text-align:right;">3</div>
<div class="t" style="top:954.21px;font-size:24px;line-height:24px;color:#404040;font-weight:400;font-family:'Liberation Mono', monospace;font-style:normal;left:115px;width:1400px;text-align:right;">4</div>
<div class="t" style="top:954.21px;font-size:24px;line-height:24px;color:#404040;font-weight:400;font-family:'Liberation Mono', monospace;font-style:normal;left:415px;width:1400px;text-align:right;">Nvidia</div>
<div class="t" style="top:954.21px;font-size:24px;line-height:24px;color:#404040;font-weight:400;font-family:'Liberation Mono', monospace;font-style:normal;left:715px;width:1400px;text-align:right;">Desktop</div>
<div class="t" style="top:954.21px;font-size:24px;line-height:24px;color:#404040;font-weight:400;font-family:'Liberation Mono', monospace;font-style:normal;left:1015px;width:1400px;text-align:right;">GeForce 8400 GS r…</div>
<div class="t" style="top:954.21px;font-size:24px;line-height:24px;color:#404040;font-weight:400;font-family:'Liberation Mono', monospace;font-style:normal;left:1315px;width:1400px;text-align:right;">2010</div>
<div class="t" style="top:1051.47px;font-size:21.3px;line-height:21.3px;color:#9a9a9a;font-weight:400;font-family:'Liberation Sans', sans-serif;font-style:normal;left:1128px;">5 rows x 13 columns</div>
<svg class="r" style="left:1340px;top:1052px;" width="22" height="21" viewBox="0 0 22 21"><g fill="#9a9a9a"><rect x="0" y="0" width="5" height="21"/><rect x="17" y="0" width="5" height="21"/></g><rect x="7.5" y="1" width="7" height="19" fill="none" stroke="#9a9a9a" stroke-width="2"/></svg>
<svg class="r" style="left:1755px;top:1050px;" width="20" height="24" viewBox="0 0 20 24"><path d="M3 10 L10 3 L17 10 M3 20 L10 13 L17 20" fill="none" stroke="#9a9a9a" stroke-width="2.5"/></svg>
<div class="t" style="top:1051.46px;font-size:21.9px;line-height:21.9px;color:#9a9a9a;font-weight:400;font-family:'Liberation Sans', sans-serif;font-style:normal;left:1786px;">Jump to top</div>
<svg class="r" style="left:1919px;top:1050px;" width="20" height="24" viewBox="0 0 20 24"><path d="M3 4 L10 11 L17 4 M3 14 L10 21 L17 14" fill="none" stroke="#9a9a9a" stroke-width="2.5"/></svg>
<div class="t" style="top:1051.29px;font-size:22.1px;line-height:22.1px;color:#9a9a9a;font-weight:400;font-family:'Liberation Sans', sans-serif;font-style:normal;left:1950px;">Jump to bottom</div>
<div class="t" style="top:1051.21px;font-size:22.2px;line-height:22.2px;color:#9a9a9a;font-weight:400;font-family:'Liberation Sans', sans-serif;font-style:normal;left:2497px;">Export to code cell</div>
<svg class="r" style="left:2696px;top:1050px;" width="22" height="24" viewBox="0 0 22 24"><path d="M0.5 0.5 H21.5 L13.5 10 V23 H8.5 V10 Z" fill="#9a9a9a"/></svg>
<div class="t" style="top:1051.80px;font-size:21.5px;line-height:21.5px;color:#9a9a9a;font-weight:400;font-family:'Liberation Sans', sans-serif;font-style:normal;left:2716px;">1</div>
<div class="r" style="left:1096px;top:1170px;width:1665px;height:167px;background:#f8f8f8;"></div>
<div class="t" style="top:1185.29px;font-size:20.5px;line-height:20.5px;color:#7a7a7a;font-weight:400;font-family:'Liberation Mono', monospace;font-style:normal;left:1035.5px;">[2]</div>
<div class="t" style="top:1225.08px;font-size:26px;line-height:26px;color:#000;font-weight:400;font-family:'Liberation Mono', monospace;font-style:normal;left:1128px;"><b style="color:#000080">import</b> pandas <b style="color:#000080">as</b> pd</div>
<div class="t" style="top:1261.08px;font-size:26px;line-height:26px;color:#000;font-weight:400;font-family:'Liberation Mono', monospace;font-style:normal;left:1128px;">dataset_s3 = pd.read_csv(<b style="color:#2f7a80">"/data/new_s3_datasource/gpus.csv"</b>)</div>
<div class="r" style="left:1096px;top:1370px;width:1665px;height:160px;background:#f8f8f8;"></div>
<div class="t" style="top:1385.29px;font-size:20.5px;line-height:20.5px;color:#7a7a7a;font-weight:400;font-family:'Liberation Mono', monospace;font-style:normal;left:1035.5px;">[3]</div>
<div class="t" style="top:1425.08px;font-size:26px;line-height:26px;color:#000;font-weight:400;font-family:'Liberation Mono', monospace;font-style:normal;left:1128px;">res = dataset_s3.append(dataset_s3)</div>
<div class="t" style="top:1461.08px;font-size:26px;line-height:26px;color:#000;font-weight:400;font-family:'Liberation Mono', monospace;font-style:normal;left:1128px;">res</div>
<div class="r" style="left:996px;top:1526px;width:1884px;height:68px;background:#fff;"></div>
<div class="r" style="left:996px;top:1526px;width:1884px;height:4px;background:#e4e4e4;"></div>
<div class="r" style="left:996px;top:1526px;width:4px;height:68px;background:#e4e4e4;"></div>
<div class="r" style="left:1170px;top:1530px;width:4px;height:64px;background:#e4e4e4;"></div>
<div class="r" style="left:1000px;top:1588px;width:170px;height:6px;background:#3b8abe;"></div>
<svg class="r" style="left:1024px;top:1552px;" width="24" height="20" viewBox="0 0 24 20"><g fill="#444"><rect x="0" y="0" width="24" height="4"/><rect x="0" y="8" width="24" height="4"/><rect x="0" y="16" width="16" height="4"/></g></svg>
<div class="t" style="top:1550.26px;font-size:24.5px;line-height:24.5px;color:#1a1a1a;font-weight:400;font-family:'Liberation Sans', sans-serif;font-style:normal;left:1069px;">Sheet</div>
<svg class="r" style="left:1194px;top:1550px;" width="24" height="24" viewBox="0 0 24 24"><path d="M12 0 V24 M0 12 H24" stroke="#666" stroke-width="3"/></svg>
<svg class="r" style="left:2834px;top:1548px;" width="28" height="28" viewBox="0 0 28 28"><g fill="#555"><rect x="0" y="0" width="28" height="3.5"/><rect x="0" y="8" width="28" height="3.5"/><rect x="0" y="16" width="28" height="3.5"/><rect x="0" y="24" width="28" height="3.5"/></g></svg>
<div class="r" style="left:0px;top:1594px;width:2880px;height:48px;background:#474747;"></div>
<div class="r" style="left:31px;top:1607px;width:30px;height:20px;background:#cfcfcf;border-radius:10px;"></div>
<svg class="r" style="left:20px;top:1605px;" width="24" height="24" viewBox="0 0 24 24"><circle cx="12" cy="12" r="12" fill="#8a8a8a"/></svg>
<div class="t" style="top:1606.45px;font-size:23.1px;line-height:23.1px;color:#ececec;font-weight:400;font-family:'Liberation Sans', sans-serif;font-style:normal;left:69px;">Reactive mode</div>
<div class="r" style="left:243px;top:1604px;width:2px;height:28px;background:#686868;"></div>
<svg class="r" style="left:266px;top:1601px;" width="30" height="30" viewBox="0 0 30 30"><g fill="#cfcfcf"><path d="M14.5 1 C8 1 8.5 3.5 8.5 3.5 V7 H15 V8.5 H5 C5 8.5 1 8 1 15 C1 22 4.5 21.5 4.5 21.5 H7 V18 C7 18 7 14 11 14 H17.5 C17.5 14 21.5 14 21.5 10.5 V4.5 C21.5 4.5 22 1 14.5 1 Z M11 3 A1.3 1.3 0 1 1 11 5.6 A1.3 1.3 0 1 1 11 3 Z"/><path d="M15.5 29 C22 29 21.5 26.5 21.5 26.5 V23 H15 V21.5 H25 C25 21.5 29 22 29 15 C29 8 25.5 8.5 25.5 8.5 H23 V12 C23 12 23 16 19 16 H12.5 C12.5 16 8.5 16 8.5 19.5 V25.5 C8.5 25.5 8 29 15.5 29 Z M19 27 A1.3 1.3 0 1 1 19 24.4 A1.3 1.3 0 1 1 19 27 Z"/></g></svg>
<div class="t" style="top:1606.45px;font-size:23.1px;line-height:23.1px;color:#ececec;font-weight:400;font-family:'Liberation Sans', sans-serif;font-style:normal;left:314px;">Python 3.8.12</div>
<div class="r" style="left:475px;top:1604px;width:2px;height:28px;background:#686868;"></div>
<div class="t" style="top:1606.45px;font-size:23.1px;line-height:23.1px;color:#ececec;font-weight:400;font-family:'Liberation Sans', sans-serif;font-style:normal;left:498px;">Calculated: 3</div>
<div class="t" style="top:1606.45px;font-size:23.1px;line-height:23.1px;color:#ececec;font-weight:400;font-family:'Liberation Sans', sans-serif;font-style:normal;left:671px;">In process: 0</div>
<div class="t" style="top:1606.45px;font-size:23.1px;line-height:23.1px;color:#ececec;font-weight:400;font-family:'Liberation Sans', sans-serif;font-style:normal;left:841px;">Errors: 0</div>
<div class="t" style="top:1606.45px;font-size:23.1px;line-height:23.1px;color:#ececec;font-weight:400;font-family:'Liberation Sans', sans-serif;font-style:normal;left:2169px;">Idle</div>
<div class="t" style="top:1606.45px;font-size:23.1px;line-height:23.1px;color:#ececec;font-weight:400;font-family:'Liberation Sans', sans-serif;font-style:normal;left:2248px;">Machine: t2.medium</div>
<div class="r" style="left:2480px;top:1604px;width:2px;height:28px;background:#686868;"></div>
<div class="t" style="top:1606.45px;font-size:23.1px;line-height:23.1px;color:#ececec;font-weight:400;font-family:'Liberation Sans', sans-serif;font-style:normal;left:2503px;">CPU:</div>
<div class="t" style="top:1606.45px;font-size:23.1px;line-height:23.1px;color:#ececec;font-weight:400;font-family:'Liberation Sans', sans-serif;font-style:normal;left:2585px;">2%</div>
<div class="t" style="top:1606.45px;font-size:23.1px;line-height:23.1px;color:#ececec;font-weight:400;font-family:'Liberation Sans', sans-serif;font-style:normal;left:2639px;">FreeMem:</div>
<div class="t" style="top:1606.45px;font-size:23.1px;line-height:23.1px;color:#ececec;font-weight:400;font-family:'Liberation Sans', sans-serif;font-style:normal;left:2776px;">1750MB</div>
</body></html>
